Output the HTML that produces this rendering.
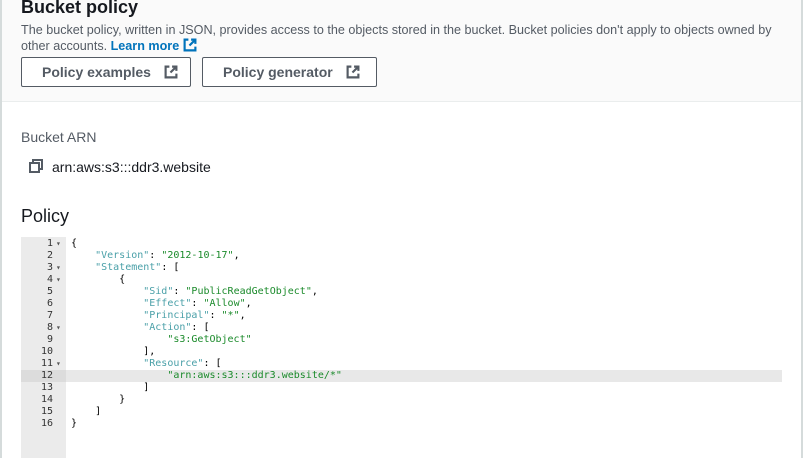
<!DOCTYPE html>
<html><head><style>
*{margin:0;padding:0;box-sizing:border-box}
body{width:805px;height:458px;overflow:hidden;background:#fff;font-family:"Liberation Sans",sans-serif;position:relative;color:#16191f}
.lb{position:absolute;left:0;top:0;width:2px;height:458px;background:#d5dbdb}
.rb{position:absolute;left:801px;top:0;width:2px;height:458px;background:#d5dbdb}
.head{position:absolute;left:2px;top:0;width:799px;height:102px;background:#fafafa;border-bottom:1px solid #eaeded}
h1{position:absolute;left:21px;top:-3px;font-size:18px;font-weight:bold;color:#16191f}
.desc{position:absolute;left:21px;top:22px;width:760px;font-size:12.6px;line-height:16px;color:#545b64}
.desc a{color:#0073bb;font-weight:bold;text-decoration:none}
.btn{position:absolute;top:57px;height:30px;border:1px solid #545b64;border-radius:2px;background:#fff;font-weight:bold;font-size:14px;color:#545b64;line-height:28px;padding-left:20px}
.lbl{position:absolute;left:21px;top:129px;font-size:14px;color:#545b64}
.arn{position:absolute;left:52px;top:159px;font-size:14px;color:#16191f}
h2{position:absolute;left:21px;top:206px;font-size:18px;font-weight:normal}
.gut{position:absolute;left:21px;top:237px;width:45px;height:221px;background:#ebebeb}
.code{position:absolute;left:21px;top:238px;font-family:"DejaVu Sans Mono",monospace;font-size:10px;line-height:12px}
.ln{display:flex;height:12px;width:761px;position:relative}
.n{width:32px;text-align:right;color:#333;}
.f{width:13px;font-size:8px;color:#555;padding-left:3px}
.t{padding-left:5px;white-space:pre;color:#000}
.k{color:#4aa0a8}.s{color:#1a8a2a}
.hl{background:#e8e8e8}.hl .n{background:#dcdcdc}
</style></head><body>
<div class="head"></div>
<div class="lb"></div><div class="rb"></div>
<h1>Bucket policy</h1>
<div class="desc">The bucket policy, written in JSON, provides access to the objects stored in the bucket. Bucket policies don't apply to objects owned by other accounts. <a>Learn more <svg width="14" height="14" viewBox="0 0 13 13" style="vertical-align:-2px"><path d="M5 1.5H1.5v10h10V8M7.5 1.5h4v4M11.5 1.5 6 7" fill="none" stroke="#0073bb" stroke-width="2"/></svg></a></div>
<div class="btn" style="left:21px;width:170px">Policy examples <svg width="14" height="14" viewBox="0 0 13 13" style="margin-left:9px;vertical-align:-2px"><path d="M5 1.5H1.5v10h10V8M7.5 1.5h4v4M11.5 1.5 6 7" fill="none" stroke="#545b64" stroke-width="2"/></svg></div>
<div class="btn" style="left:202px;width:175px">Policy generator <svg width="14" height="14" viewBox="0 0 13 13" style="margin-left:9px;vertical-align:-2px"><path d="M5 1.5H1.5v10h10V8M7.5 1.5h4v4M11.5 1.5 6 7" fill="none" stroke="#545b64" stroke-width="2"/></svg></div>
<div class="lbl">Bucket ARN</div>
<svg style="position:absolute;left:29px;top:159px" width="14" height="14" viewBox="0 0 14 14"><path d="M4 4V1h9v9h-3M1 4h9v9H1z" fill="none" stroke="#545b64" stroke-width="2"/></svg>
<div class="arn">arn:aws:s3:::ddr3.website</div>
<h2>Policy</h2>
<div class="gut"></div>
<div class="code">
<div class="ln"><span class="n">1</span><span class="f">▾</span><span class="t">{</span></div>
<div class="ln"><span class="n">2</span><span class="f"></span><span class="t">    <span class="k">"Version"</span>: <span class="s">"2012-10-17"</span>,</span></div>
<div class="ln"><span class="n">3</span><span class="f">▾</span><span class="t">    <span class="k">"Statement"</span>: [</span></div>
<div class="ln"><span class="n">4</span><span class="f">▾</span><span class="t">        {</span></div>
<div class="ln"><span class="n">5</span><span class="f"></span><span class="t">            <span class="k">"Sid"</span>: <span class="s">"PublicReadGetObject"</span>,</span></div>
<div class="ln"><span class="n">6</span><span class="f"></span><span class="t">            <span class="k">"Effect"</span>: <span class="s">"Allow"</span>,</span></div>
<div class="ln"><span class="n">7</span><span class="f"></span><span class="t">            <span class="k">"Principal"</span>: <span class="s">"*"</span>,</span></div>
<div class="ln"><span class="n">8</span><span class="f">▾</span><span class="t">            <span class="k">"Action"</span>: [</span></div>
<div class="ln"><span class="n">9</span><span class="f"></span><span class="t">                <span class="s">"s3:GetObject"</span></span></div>
<div class="ln"><span class="n">10</span><span class="f"></span><span class="t">            ],</span></div>
<div class="ln"><span class="n">11</span><span class="f">▾</span><span class="t">            <span class="k">"Resource"</span>: [</span></div>
<div class="ln hl"><span class="n">12</span><span class="f" style="background:#dcdcdc"></span><span class="t">                <span class="s">"arn:aws:s3:::ddr3.website/*"</span></span></div>
<div class="ln"><span class="n">13</span><span class="f"></span><span class="t">            ]</span></div>
<div class="ln"><span class="n">14</span><span class="f"></span><span class="t">        }</span></div>
<div class="ln"><span class="n">15</span><span class="f"></span><span class="t">    ]</span></div>
<div class="ln"><span class="n">16</span><span class="f"></span><span class="t">}</span></div>
</div>
</body></html>
